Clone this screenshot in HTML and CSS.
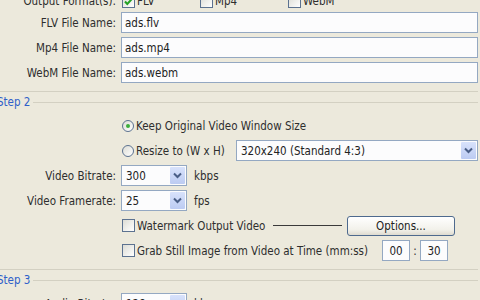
FILE: index.html
```html
<!DOCTYPE html>
<html lang="en">
<head>
    <meta charset="UTF-8">
    <title>Video Output Settings</title>
    <link rel="stylesheet" href="styles.css">
</head>
<body>
    <div class="panel">
        <div class="group first">
            <div class="rows">
                <div class="row short">
                    <span class="label">Output Format(s):</span>
                    <div class="field">
                        <span class="fmt fmt-flv"><span class="box checked"><svg viewBox="0 0 11 11"><path d="M2 5.5 L4.3 8 L9 2.8" /></svg></span>FLV</span>
                        <span class="fmt fmt-mp4"><span class="box"></span>Mp4</span>
                        <span class="fmt"><span class="box"></span>WebM</span>
                    </div>
                </div>
                <div class="row">
                    <span class="label">FLV File Name:</span>
                    <input class="text" type="text" value="ads.flv">
                </div>
                <div class="row">
                    <span class="label">Mp4 File Name:</span>
                    <input class="text" type="text" value="ads.mp4">
                </div>
                <div class="row">
                    <span class="label">WebM File Name:</span>
                    <input class="text" type="text" value="ads.webm">
                </div>
            </div>
        </div>

        <div class="group">
            <div class="group-head"><span class="title">Step 2</span></div>
            <div class="rows">
                <div class="row">
                    <span class="label"></span>
                    <div class="field">
                        <span class="opt"><span class="radio on"></span>Keep Original Video Window Size</span>
                    </div>
                </div>
                <div class="row">
                    <span class="label"></span>
                    <div class="field">
                        <span class="opt resize"><span class="radio"></span>Resize to (W x H)</span>
                        <div class="combo wide"><span class="value">320x240 (Standard 4:3)</span><span class="arrow"><svg viewBox="0 0 15 17"><path d="M4 6.5 L7.5 10 L11 6.5" /></svg></span></div>
                    </div>
                </div>
                <div class="row">
                    <span class="label">Video Bitrate:</span>
                    <div class="field">
                        <div class="combo small"><span class="value">300</span><span class="arrow"><svg viewBox="0 0 15 17"><path d="M4 6.5 L7.5 10 L11 6.5" /></svg></span></div>
                        <span class="unit">kbps</span>
                    </div>
                </div>
                <div class="row">
                    <span class="label">Video Framerate:</span>
                    <div class="field">
                        <div class="combo small"><span class="value">25</span><span class="arrow"><svg viewBox="0 0 15 17"><path d="M4 6.5 L7.5 10 L11 6.5" /></svg></span></div>
                        <span class="unit">fps</span>
                    </div>
                </div>
                <div class="row">
                    <span class="label"></span>
                    <div class="field">
                        <span class="opt"><span class="box"></span>Watermark Output Video</span>
                        <span class="rule"></span>
                        <button class="btn">Options...</button>
                    </div>
                </div>
                <div class="row">
                    <span class="label"></span>
                    <div class="field">
                        <span class="opt"><span class="box"></span>Grab Still Image from Video at Time (mm:ss)</span>
                        <input class="text time" type="text" value="00">
                        <span class="colon">:</span>
                        <input class="text time" type="text" value="30">
                    </div>
                </div>
            </div>
        </div>

        <div class="group">
            <div class="group-head"><span class="title">Step 3</span></div>
            <div class="rows">
                <div class="row">
                    <span class="label">Audio Bitrate:</span>
                    <div class="field">
                        <div class="combo small"><span class="value">128</span><span class="arrow"><svg viewBox="0 0 15 17"><path d="M4 6.5 L7.5 10 L11 6.5" /></svg></span></div>
                        <span class="unit">kbps</span>
                    </div>
                </div>
            </div>
        </div>
    </div>
</body>
</html>
```

FILE: styles.css
```css
body {
    margin: 0;
    background: #ece9dc;
    color: #2e2e2e;
    font-family: "DejaVu Sans Condensed", "DejaVu Sans", sans-serif;
    font-stretch: condensed;
    font-size: 11.5px;
    overflow: hidden;
}
.panel {
    margin-top: -6px;
    padding-right: 2px;
}
.group {
    margin-top: 3px;
    padding-bottom: 8px;
    border-bottom: 1px solid #d3d0c2;
}
.group.first {
    margin-top: 0;
}
.group-head {
    display: flex;
    align-items: center;
    height: 14px;
    margin-left: -3px;
    margin-bottom: 6px;
}
.group-head::after {
    content: "";
    flex: 1;
    border-top: 1px solid #d3d0c2;
}
.title {
    color: #2f5fc9;
    padding-right: 3px;
}
.rows {
    display: flex;
    flex-direction: column;
    gap: 4px;
}
.row {
    display: grid;
    grid-template-columns: 116px 1fr;
    column-gap: 5px;
    align-items: center;
    height: 21px;
}
.row.short {
    height: 14px;
}
.label {
    text-align: right;
    white-space: nowrap;
}
.field {
    display: flex;
    align-items: center;
    height: 100%;
    white-space: nowrap;
}
.text {
    box-sizing: border-box;
    height: 21px;
    width: 100%;
    margin: 0;
    padding: 0 3px;
    border: 1px solid #94a8c2;
    background: #fcfcfd;
    font: inherit;
    color: #222;
    outline: none;
}
.fmt {
    display: flex;
    align-items: center;
}
.fmt-flv { width: 78px; }
.fmt-mp4 { width: 88px; }
.box {
    box-sizing: border-box;
    width: 13px;
    height: 13px;
    margin-left: 1px;
    margin-right: 2px;
    border: 1px solid #5c7290;
    background: linear-gradient(135deg, #dcdcd5, #ffffff);
    display: inline-flex;
}
.box svg {
    width: 11px;
    height: 11px;
}
.box path {
    fill: none;
    stroke: #24a124;
    stroke-width: 2;
}
.opt {
    display: flex;
    align-items: center;
}
.radio {
    box-sizing: border-box;
    width: 12px;
    height: 12px;
    margin-left: 1px;
    margin-right: 2px;
    border: 1px solid #5c7290;
    border-radius: 50%;
    background: linear-gradient(135deg, #dcdcd5, #ffffff);
    display: inline-flex;
    align-items: center;
    justify-content: center;
}
.radio.on::after {
    content: "";
    width: 4px;
    height: 4px;
    border-radius: 50%;
    background: #3cae3c;
}
.resize {
    width: 115px;
}
.combo {
    box-sizing: border-box;
    height: 21px;
    display: flex;
    align-items: center;
    border: 1px solid #94a8c2;
    background: #fcfcfd;
    padding: 1px;
    color: #222;
}
.combo.wide {
    flex: 1;
}
.combo.small {
    width: 66px;
}
.value {
    flex: 1;
    padding-left: 3px;
}
.arrow {
    width: 15px;
    height: 17px;
    background: linear-gradient(#d8e2fb, #bccbf2);
    border-radius: 1px;
}
.arrow svg {
    width: 15px;
    height: 17px;
    display: block;
}
.arrow path {
    fill: none;
    stroke: #4a5e86;
    stroke-width: 2;
}
.unit {
    margin-left: 7px;
}
.rule {
    flex: 1;
    margin: 0 5px 0 8px;
    border-top: 1px solid #3a3a3a;
}
.btn {
    box-sizing: border-box;
    flex-shrink: 0;
    width: 108px;
    height: 20px;
    margin-right: 23px;
    border: 1px solid #4e6a8e;
    border-radius: 3px;
    background: linear-gradient(#ffffff, #f2f1ea 70%, #dedbd0);
    font: inherit;
    color: #222;
    padding: 0;
}
.text.time {
    flex-shrink: 0;
    width: 28px;
    height: 21px;
    text-align: center;
    margin-left: 14px;
}
.colon {
    width: 10px;
    text-align: center;
}
.colon + .text.time {
    margin-left: 0;
}
```
